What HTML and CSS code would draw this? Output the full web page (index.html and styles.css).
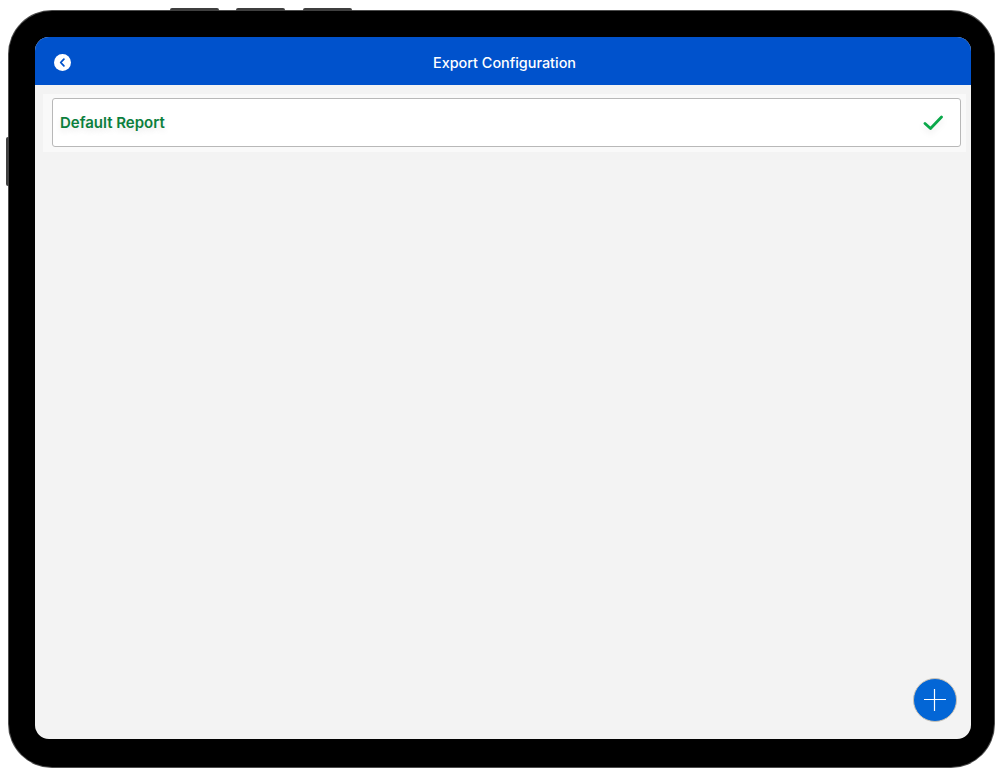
FILE: index.html
```html
<!DOCTYPE html>
<html lang="en">
<head>
<meta charset="utf-8">
<title>Export Configuration</title>
<link rel="stylesheet" href="styles.css">
</head>
<body>
<div class="device">
  <span class="hw hw-top hw-1"></span>
  <span class="hw hw-top hw-2"></span>
  <span class="hw hw-top hw-3"></span>
  <span class="hw hw-side"></span>
  <div class="screen">
    <header class="header">
      <button class="back" aria-label="Back">
        <svg width="17" height="17" viewBox="0 0 17 17"><circle cx="8.5" cy="8.5" r="8.5" fill="#fff"/><path d="M9.9 5.1 6.7 8.5l3.2 3.4" fill="none" stroke="#0052cc" stroke-width="1.8" stroke-linecap="round" stroke-linejoin="round"/></svg>
      </button>
      <h1 class="title">Export Configuration</h1>
    </header>
    <main class="content">
      <div class="list">
        <div class="row">
          <span class="row-label">Default Report</span>
          <svg class="check" width="22" height="18" viewBox="0 0 22 18"><path d="M2 9.5 7.5 14.5 18.5 3" fill="none" stroke="#0aa84a" stroke-width="2.8" stroke-linecap="round" stroke-linejoin="round"/></svg>
        </div>
      </div>
    </main>
    <button class="fab" aria-label="Add">
      <svg width="24" height="24" viewBox="0 0 24 24"><path d="M11.5 1v22M1 11.5h22" stroke="#fff" stroke-width="1.2"/></svg>
    </button>
  </div>
</div>
</body>
</html>
```
FILE: styles.css
```css
html, body {
  margin: 0;
  height: 774px;
  background: #fff;
  overflow: hidden;
}
body {
  padding: 11px 6px 7px 9px;
  box-sizing: border-box;
  font-family: Inter, "Liberation Sans", sans-serif;
}
.device {
  position: relative;
  box-sizing: border-box;
  width: 985px;
  height: 756px;
  padding: 26px 23px 28px 26px;
  background: #000;
  border-radius: 43px;
  box-shadow: 0 0 0 1px #4d4d4d;
}
.hw {
  position: absolute;
  background: #3f3f3f;
}
.hw-top {
  top: -3px;
  width: 49px;
  height: 3px;
  border-radius: 2px 2px 0 0;
}
.hw-1 { left: 161px; }
.hw-2 { left: 227px; }
.hw-3 { left: 294px; }
.hw-side {
  left: -3px;
  top: 126px;
  width: 3px;
  height: 49px;
  border-radius: 2px 0 0 2px;
}
.screen {
  position: relative;
  display: flex;
  flex-direction: column;
  height: 100%;
  background: #f3f3f3;
  border-radius: 14px;
  overflow: hidden;
}
.header {
  position: relative;
  flex: none;
  display: flex;
  align-items: center;
  justify-content: center;
  height: 48px;
  background: #0052cc;
}
.back {
  position: absolute;
  left: 19px;
  top: 17px;
  padding: 0;
  border: 0;
  background: none;
  line-height: 0;
}
.title {
  margin: 3px 0 0 3px;
  font-size: 14.4px;
  font-weight: 500;
  color: #fff;
}
.content {
  padding: 9px 5px 0 8px;
}
.list {
  padding: 4px 5px 5px 9px;
  background: #f9f9f9;
}
.row {
  display: flex;
  align-items: center;
  justify-content: space-between;
  box-sizing: border-box;
  height: 49px;
  padding: 0 15px 0 7px;
  background: #fff;
  border: 1px solid #b8b8b8;
  border-radius: 3px;
}
.row-label {
  font-size: 15px;
  font-weight: 600;
  color: #0b7f3d;
  text-shadow: 0 3px 6px rgba(0, 0, 0, .1);
}
.check {
  filter: drop-shadow(0 3px 3px rgba(0, 0, 0, .08));
}
.fab {
  position: absolute;
  right: 14px;
  bottom: 17px;
  display: flex;
  align-items: center;
  justify-content: center;
  box-sizing: border-box;
  width: 44px;
  height: 44px;
  padding: 0;
  background: #0366d6;
  border: 1px solid #c9c2b6;
  border-radius: 50%;
}
```
